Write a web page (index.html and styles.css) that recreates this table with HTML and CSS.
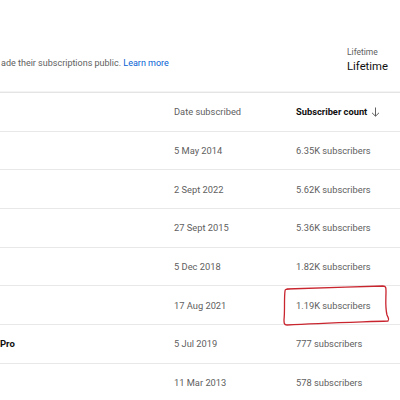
FILE: index.html
```html
<!DOCTYPE html>
<html>
<head>
<meta charset="utf-8">
<link rel="stylesheet" href="styles.css">
</head>
<body>
<div class="page">
  <div class="top">
    <p class="info">ade their subscriptions public. <a class="link" href="#">Learn more</a></p>
    <div class="period">
      <div class="period-label">Lifetime</div>
      <div class="period-value">Lifetime</div>
    </div>
  </div>
  <div class="table">
    <div class="row head">
      <div class="c-name"></div>
      <div class="c-date">Date subscribed</div>
      <div class="c-count sort">Subscriber count
        <svg class="arrow" width="9" height="10" viewBox="0 0 9 10"><path d="M4.5 0.5V9M1 5.8L4.5 9.2L8 5.8" fill="none" stroke="#606060" stroke-width="1"/></svg>
      </div>
    </div>
    <div class="row"><div class="c-name"></div><div class="c-date">5 May 2014</div><div class="c-count">6.35K subscribers</div></div>
    <div class="row"><div class="c-name"></div><div class="c-date">2 Sept 2022</div><div class="c-count">5.62K subscribers</div></div>
    <div class="row"><div class="c-name"></div><div class="c-date">27 Sept 2015</div><div class="c-count">5.36K subscribers</div></div>
    <div class="row"><div class="c-name"></div><div class="c-date">5 Dec 2018</div><div class="c-count">1.82K subscribers</div></div>
    <div class="row"><div class="c-name"></div><div class="c-date">17 Aug 2021</div><div class="c-count">1.19K subscribers</div></div>
    <div class="row"><div class="c-name name">Pro</div><div class="c-date">5 Jul 2019</div><div class="c-count">777 subscribers</div></div>
    <div class="row"><div class="c-name"></div><div class="c-date">11 Mar 2013</div><div class="c-count">578 subscribers</div></div>
  </div>
  <svg class="mark" width="112" height="46" viewBox="0 0 112 46">
    <path d="M5 4 C30 3 70 2 101 1 C104 1 104 3 104 6 C104 14 103 22 105 30 C106 33 108 34 106 36 C80 37 40 38 5 40 C2 40 2 38 2 35 C3 25 2 14 3 6 C3 4 4 4 9 4" fill="none" stroke="#c9252f" stroke-width="1.3" stroke-linecap="round"/>
  </svg>
</div>
</body>
</html>
```
FILE: styles.css
```css
html, body {
  margin: 0;
  padding: 0;
  background: #ffffff;
}
.page {
  position: relative;
  width: 400px;
  height: 400px;
  overflow: hidden;
  font-family: Roboto, "Liberation Sans", sans-serif;
  color: #0f0f0f;
}
.top {
  height: 92px;
  display: flex;
  justify-content: space-between;
  align-items: flex-start;
  padding-left: 1px;
  box-sizing: border-box;
}
.info {
  margin: 57px 0 0;
  font-size: 9px;
  color: #606060;
  line-height: 12px;
}
.link {
  color: #065fd4;
  text-decoration: none;
}
.period {
  width: 53px;
  margin-top: 47px;
}
.period-label {
  font-size: 8.5px;
  color: #606060;
  line-height: 11px;
}
.period-value {
  font-size: 11.3px;
  color: #0f0f0f;
  line-height: 16px;
  margin-top: 1px;
}
.table {
  display: flex;
  flex-direction: column;
}
.row {
  display: grid;
  grid-template-columns: 174px 122px 1fr;
  align-items: center;
  height: 38.7px;
  box-sizing: border-box;
  border-top: 1px solid #e8e8e8;
  font-size: 9.3px;
  color: #606060;
}
.head {
  border-top: 1px solid #e4e4e4;
  box-shadow: 0 -1px 0 #f4f4f4;
}
.sort {
  font-weight: 700;
  color: #0f0f0f;
  display: flex;
  align-items: center;
  gap: 4px;
}
.arrow {
  display: block;
}
.name {
  font-weight: 700;
  color: #0f0f0f;
  font-size: 9.5px;
}
.mark {
  position: absolute;
  left: 282px;
  top: 285px;
}
```
